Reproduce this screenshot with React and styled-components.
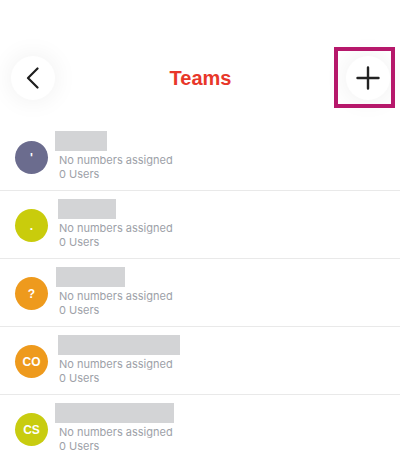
import React from 'react'
import styled, { createGlobalStyle } from 'styled-components'

const GlobalStyle = createGlobalStyle`
  html, body {
    margin: 0;
    padding: 0;
    background: #ffffff;
  }
  body {
    font-family: Inter, "Liberation Sans", sans-serif;
    overflow: hidden;
  }
`

const Page = styled.div`
  width: 400px;
  height: 458px;
  overflow: hidden;
  background: #ffffff;
`

const Header = styled.div`
  display: flex;
  align-items: center;
  justify-content: space-between;
  height: 123px;
  box-sizing: border-box;
  padding: 56px 10px 23px 11px;
`

const RoundButton = styled.button`
  position: relative;
  width: 44px;
  height: 44px;
  border-radius: 50%;
  border: none;
  padding: 0;
  background: #ffffff;
  box-shadow: 0 0 26px rgba(0, 0, 0, 0.07);
  display: flex;
  align-items: center;
  justify-content: center;
  color: #222;
  cursor: pointer;
`

const Highlight = styled.span`
  position: absolute;
  left: -12px;
  top: -9px;
  width: 61px;
  height: 61px;
  box-sizing: border-box;
  border: 4px solid #b6186b;
  pointer-events: none;
`

const Title = styled.h1`
  margin: 0;
  font-family: "Liberation Sans", Arial, sans-serif;
  font-size: 20px;
  font-weight: 700;
  color: #e8372a;
`

const List = styled.ul`
  list-style: none;
  margin: 0;
  padding: 0;
`

const Row = styled.li`
  display: flex;
  align-items: flex-start;
  height: 68px;
  box-sizing: border-box;
  padding: 8px 0 0 15px;
  border-bottom: 1px solid #e9e9e9;
`

const Avatar = styled.div`
  flex: none;
  width: 33px;
  height: 33px;
  margin-top: 10px;
  border-radius: 50%;
  background: ${p => p.color};
  color: #ffffff;
  display: flex;
  align-items: center;
  justify-content: center;
  font-family: "Liberation Sans", Arial, sans-serif;
  font-size: 12px;
  font-weight: 700;
`

const Info = styled.div`
  display: flex;
  flex-direction: column;
  margin-left: 11px;
`

const Redacted = styled.div`
  height: 20px;
  width: ${p => p.w}px;
  margin-left: ${p => p.offset}px;
  margin-bottom: 2px;
  background: #d3d4d6;
`

const Meta = styled.span`
  font-size: 11px;
  line-height: 14px;
  color: #9da1a8;
  white-space: nowrap;
`

const teams = [
  { initials: "'", color: '#6b6c8e', w: 52, offset: -4 },
  { initials: '.', color: '#c9cc0c', w: 58, offset: -1 },
  { initials: '?', color: '#ee9a1d', w: 69, offset: -3 },
  { initials: 'CO', color: '#ee9a1d', w: 122, offset: -1 },
  { initials: 'CS', color: '#c8cc10', w: 119, offset: -4 },
]

function BackIcon() {
  return (
    <svg width="14" height="22" viewBox="0 0 14 22" fill="none">
      <polyline points="11.5,1.5 2,11 11.5,20.5" stroke="#1e1e1e" strokeWidth="2.2" strokeLinecap="round" strokeLinejoin="round" />
    </svg>
  )
}

function PlusIcon() {
  return (
    <svg width="24" height="24" viewBox="0 0 24 24" fill="none">
      <path d="M12 1.5v21M1.5 12h21" stroke="#222" strokeWidth="2.4" strokeLinecap="round" />
    </svg>
  )
}

export default function App() {
  return (
    <Page>
      <GlobalStyle />
      <Header>
        <RoundButton aria-label="Back"><BackIcon /></RoundButton>
        <Title>Teams</Title>
        <RoundButton aria-label="Add team">
          <PlusIcon />
          <Highlight />
        </RoundButton>
      </Header>
      <List>
        {teams.map((t, i) => (
          <Row key={i}>
            <Avatar color={t.color}>{t.initials}</Avatar>
            <Info>
              <Redacted w={t.w} offset={t.offset} />
              <Meta>No numbers assigned</Meta>
              <Meta>0 Users</Meta>
            </Info>
          </Row>
        ))}
      </List>
    </Page>
  )
}
